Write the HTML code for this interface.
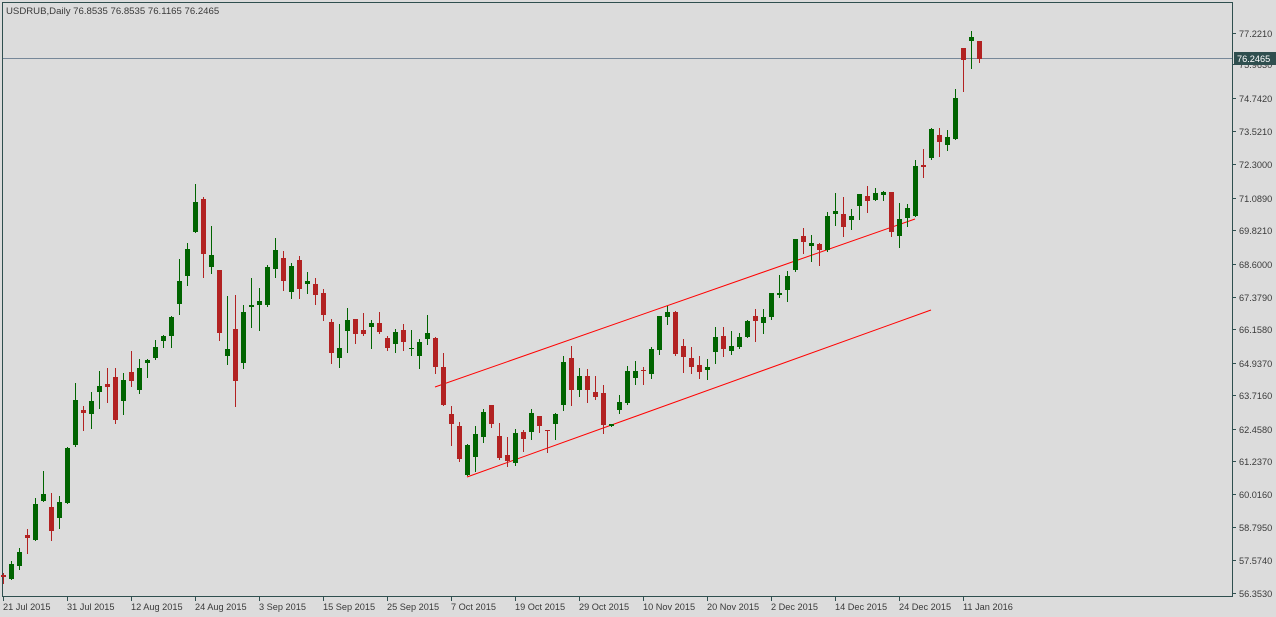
<!DOCTYPE html>
<html><head><meta charset="utf-8"><style>
html,body{margin:0;padding:0;background:#dcdcdc;width:1276px;height:617px;overflow:hidden}
svg{display:block}
text{font-family:"Liberation Sans",sans-serif;font-size:9.2px;fill:#3a3a3a}
</style></head><body>
<svg id="s" width="1276" height="617" xmlns="http://www.w3.org/2000/svg">
<rect x="0" y="0" width="1276" height="617" fill="#dcdcdc"/>
<rect x="2.5" y="2.5" width="1230" height="594" fill="none" stroke="#2f4f4f" stroke-width="1"/>
<text x="6" y="14" style="font-size:9.6px">USDRUB,Daily  76.8535 76.8535 76.1165 76.2465</text>
<line x1="3" y1="58.5" x2="1232" y2="58.5" stroke="#778899" stroke-width="1"/>
<line x1="435" y1="387" x2="915" y2="219" stroke="#ff0000" stroke-width="1"/>
<line x1="467" y1="477" x2="931" y2="310" stroke="#ff0000" stroke-width="1"/>
<g id="c"></g>
<g id="ax"></g>
<text x="1239" y="37">77.2210</text>
<text x="1239" y="68">75.9630</text>
<text x="1239" y="102">74.7420</text>
<text x="1239" y="135">73.5210</text>
<text x="1239" y="168">72.3000</text>
<text x="1239" y="202">71.0890</text>
<text x="1239" y="234">69.8210</text>
<text x="1239" y="268">68.6000</text>
<text x="1239" y="301">67.3790</text>
<text x="1239" y="333">66.1580</text>
<text x="1239" y="367">64.9370</text>
<text x="1239" y="399">63.7160</text>
<text x="1239" y="433">62.4580</text>
<text x="1239" y="465">61.2370</text>
<text x="1239" y="498">60.0160</text>
<text x="1239" y="531">58.7950</text>
<text x="1239" y="564">57.5740</text>
<text x="1239" y="597">56.3530</text>
<rect x="1234" y="52" width="42" height="13" fill="#2f4f4f"/>
<text x="1237" y="62" style="fill:#ffffff">76.2465</text>
<text x="3" y="610">21 Jul 2015</text>
<text x="67" y="610">31 Jul 2015</text>
<text x="131" y="610">12 Aug 2015</text>
<text x="195" y="610">24 Aug 2015</text>
<text x="259" y="610">3 Sep 2015</text>
<text x="323" y="610">15 Sep 2015</text>
<text x="387" y="610">25 Sep 2015</text>
<text x="451" y="610">7 Oct 2015</text>
<text x="515" y="610">19 Oct 2015</text>
<text x="579" y="610">29 Oct 2015</text>
<text x="643" y="610">10 Nov 2015</text>
<text x="707" y="610">20 Nov 2015</text>
<text x="771" y="610">2 Dec 2015</text>
<text x="835" y="610">14 Dec 2015</text>
<text x="899" y="610">24 Dec 2015</text>
<text x="963" y="610">11 Jan 2016</text>
</svg>
<script>
var D=[
"r575,577,573,583","g564,579,561,579","g552,566,548,569","r535,538,529,553","g504,540,498,540","g494,501,471,501","r507,531,493,540","g502,518,496,528","g448,503,447,503","g400,445,383,446",
"r410,413,406,430","g401,414,392,428","g386,392,371,408","r384,387,368,402","r377,420,368,423","g380,401,373,414","r372,381,351,386","g368,390,359,393","g360,363,359,377","g347,358,340,359",
"g336,341,335,347","g317,336,316,347","g281,304,259,314","g249,276,243,285","g202,232,184,232","r199,254,197,277","g255,267,226,273","r270,333,270,340","g349,356,296,364","r329,381,295,406",
"g312,363,305,368","g305,307,278,327","g301,305,288,330","g267,305,265,306","g250,269,238,277","r258,281,251,290","g266,292,263,298","r260,289,256,298","g281,284,272,293","r284,295,278,304",
"r293,315,289,320","r322,353,319,363","g348,358,324,367","g320,331,308,352","r319,334,319,343","r330,334,313,335","g323,327,320,348","r323,332,312,333","r338,348,336,350","g332,344,329,352",
"r330,342,324,350","g348,349,330,355","g342,356,339,368","g333,339,315,344","r338,367,337,373","r367,405,353,405","r414,424,406,445","r426,459,422,461","g445,475,444,475","g434,457,426,471",
"g412,437,409,442","r405,424,405,427","r436,458,423,459","r455,461,437,466","g433,463,429,465","r432,439,430,451","g413,432,409,439","r416,426,416,432","r430,431,430,452","g414,424,413,439",
"g362,405,356,410","r358,390,346,405","g376,390,368,396","r376,390,369,402","r392,397,376,399","r393,425,385,433","g424,426,424,426","g402,410,395,413","g371,403,366,404","g371,378,361,384",
"r370,371,367,384","g349,374,347,378","g316,350,316,354","g312,317,306,324","r312,354,311,355","r346,357,339,372","r358,367,347,373","r365,372,356,378","g367,370,359,379","g337,352,327,363",
"r336,349,327,356","g346,351,331,354","g337,347,333,348","g321,337,320,337","r316,321,309,341","g317,323,309,333","g293,317,293,319","g293,295,275,297","g276,290,271,301","g239,270,239,271",
"r236,242,228,253","g243,246,235,261","r244,250,243,265","g216,250,212,251","g211,214,193,225","r214,227,197,236","g216,220,209,229","g194,206,194,219","r196,201,186,212","g193,200,188,200",
"g192,195,191,200","r192,232,192,236","g219,236,203,247","g208,218,204,226","g166,216,160,216","r165,167,149,177","g129,158,128,159","r135,142,128,156","g137,145,130,150","g98,139,89,139",
"r48,60,48,91","g37,41,31,68","r41,59,41,62"];
var g=document.getElementById("c"),h="";
D.forEach(function(s,i){var col=s[0]=="g"?"#006400":"#b22222";var v=s.slice(1).split(",").map(Number);var x=3+8*i;
h+='<line x1="'+(x+.5)+'" y1="'+v[2]+'" x2="'+(x+.5)+'" y2="'+(v[3]+1)+'" stroke="'+col+'" stroke-width="1"/>';
var hh=Math.max(1,v[1]-v[0]);h+='<rect x="'+(x-2)+'" y="'+v[0]+'" width="5" height="'+hh+'" fill="'+col+'"/>';});
g.innerHTML=h;
var a="",p=[33,64,98,131,164,198,230,264,297,329,363,395,429,461,494,527,560,593];
p.forEach(function(y){a+='<line x1="1232" y1="'+(y+.5)+'" x2="1236" y2="'+(y+.5)+'" stroke="#2f4f4f"/>';});
for(var k=0;k<16;k++){var x=3+64*k;a+='<line x1="'+(x+.5)+'" y1="596" x2="'+(x+.5)+'" y2="601" stroke="#2f4f4f"/>';}
document.getElementById("ax").innerHTML=a;
</script>
</body></html>
